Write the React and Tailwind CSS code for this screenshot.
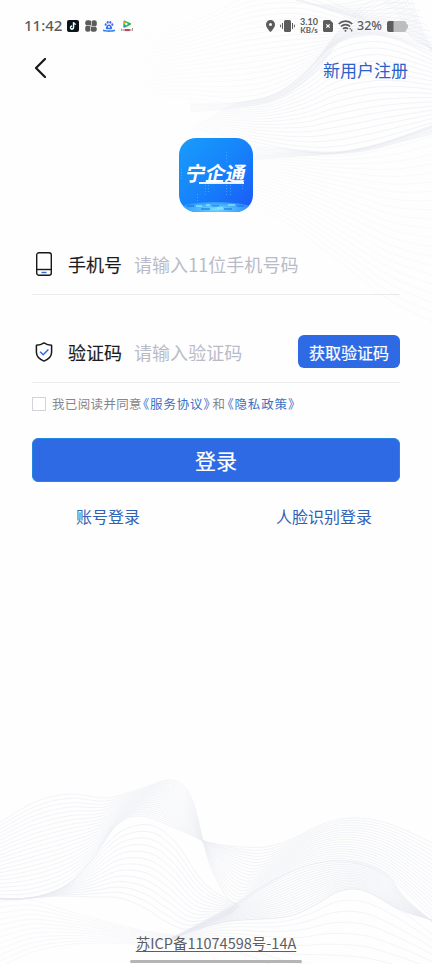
import { useMemo } from 'react';

// Each sheet is a fan of lines running between two guide curves
const TOP_SHEETS = [
  {
    from: [[110, 40], [190, 22], [250, -4], [300, -8], [345, 8], [385, 32], [420, 48], [440, 56]],
    to: [[110, 100], [180, 98], [235, 103], [275, 94], [308, 70], [335, 36], [360, 8], [400, -14]],
    lines: 20,
    opacity: 0.38
  },
  {
    from: [[235, 103], [275, 94], [308, 70], [335, 44], [370, 35], [400, 41], [440, 60]],
    to: [[190, 128], [250, 141], [300, 151], [335, 153], [370, 147], [400, 138], [440, 124]],
    lines: 18,
    opacity: 0.5
  },
  {
    from: [[270, -8], [300, 1], [325, 5], [355, 2], [385, -8], [410, -10]],
    to: [[270, -8], [310, 3], [350, 16], [400, 28], [415, 40], [440, 52]],
    lines: 10,
    opacity: 0.45
  },
  {
    from: [[408, -8], [415, 10], [422, 30], [432, 50], [445, 80]],
    to: [[370, -8], [395, 10], [412, 36], [426, 45], [445, 44]],
    lines: 8,
    opacity: 0.4
  },
  {
    from: [[190, 103], [235, 103], [275, 94], [308, 70], [335, 36], [360, 8]],
    to: [[190, 112], [235, 108], [280, 98], [315, 72], [340, 42], [372, 33]],
    lines: 8,
    opacity: 0.5
  },
  {
    from: [[220, 160], [290, 153], [335, 153], [370, 147], [400, 138], [440, 124]],
    to: [[180, 185], [240, 200], [290, 225], [340, 262], [390, 300], [440, 325]],
    lines: 22,
    opacity: 0.22
  },
  {
    from: [[250, 146], [300, 150], [335, 152], [370, 146], [400, 137], [440, 122]],
    to: [[250, 160], [300, 156], [335, 154], [370, 150], [400, 142], [440, 132]],
    lines: 8,
    opacity: 0.45
  }
];

const BOTTOM_SHEETS = [
  {
    from: [[-6, 826], [35, 802], [70, 794], [107, 798], [140, 789], [172, 780], [191, 797], [203, 841]],
    to: [[-6, 898], [30, 898], [65, 886], [92, 860], [116, 826], [140, 816], [175, 828], [203, 841]],
    lines: 22,
    opacity: 0.5
  },
  {
    from: [[-6, 898], [30, 898], [65, 886], [92, 860], [120, 832], [150, 825], [175, 842], [205, 884], [240, 906]],
    to: [[-6, 900], [30, 898], [60, 896], [92, 897], [120, 898], [145, 908], [165, 921], [190, 929], [232, 913]],
    lines: 13,
    opacity: 0.55
  },
  {
    from: [[203, 841], [230, 846], [265, 847], [292, 839], [320, 825], [352, 818], [390, 824], [440, 847]],
    to: [[203, 841], [213, 872], [234, 903], [262, 888], [300, 868], [345, 861], [390, 878], [440, 926]],
    lines: 19,
    opacity: 0.55
  },
  {
    from: [[172, 938], [225, 910], [270, 882], [310, 865], [350, 861], [385, 873], [405, 898], [440, 928]],
    to: [[172, 938], [225, 922], [285, 917], [315, 905], [340, 891], [365, 891], [400, 910], [440, 922]],
    lines: 18,
    opacity: 0.6
  },
  {
    from: [[172, 938], [225, 922], [285, 917], [315, 905], [340, 891], [365, 891], [400, 910], [440, 940]],
    to: [[172, 938], [215, 944], [250, 956], [285, 970], [320, 976], [365, 980], [400, 985], [440, 990]],
    lines: 9,
    opacity: 0.45
  },
  {
    from: [[-6, 902], [30, 900], [65, 910], [100, 920], [140, 930], [180, 936]],
    to: [[-6, 970], [30, 953], [65, 945], [100, 943], [140, 944], [180, 940]],
    lines: 12,
    opacity: 0.3
  }
];

const round = (n) => Math.round(n * 10) / 10;

// Catmull-Rom through the points, written out as cubic segments
const toPath = (points) => {
  let d = `M${round(points[0][0])} ${round(points[0][1])}`;
  for (let i = 0; i < points.length - 1; i++) {
    const p0 = points[i - 1] || points[i];
    const p1 = points[i];
    const p2 = points[i + 1];
    const p3 = points[i + 2] || p2;
    d += `C${round(p1[0] + (p2[0] - p0[0]) / 6)} ${round(p1[1] + (p2[1] - p0[1]) / 6)} ${round(p2[0] - (p3[0] - p1[0]) / 6)} ${round(p2[1] - (p3[1] - p1[1]) / 6)} ${round(p2[0])} ${round(p2[1])}`;
  }
  return d;
};

const buildLines = ({ from, to, lines }) =>
  Array.from({ length: lines }, (_, i) => {
    const t = i / (lines - 1);
    return toPath(from.map(([x, y], k) => [x + (to[k][0] - x) * t, y + (to[k][1] - y) * t]));
  });

const WaveBackground = () => {
  const sheets = useMemo(
    () => [...TOP_SHEETS, ...BOTTOM_SHEETS].map((sheet) => ({ opacity: sheet.opacity, paths: buildLines(sheet) })),
    []
  );

  return (
    <svg className="absolute inset-0 w-full h-full pointer-events-none" viewBox="0 0 432 964" fill="none">
      <defs>
        <linearGradient id="fade" x1="110" y1="0" x2="320" y2="0" gradientUnits="userSpaceOnUse">
          <stop offset="0" stopColor="#fff" stopOpacity="0" />
          <stop offset="1" stopColor="#fff" />
        </linearGradient>
        <mask id="topFade" maskUnits="userSpaceOnUse" x="0" y="0" width="432" height="340">
          <rect width="432" height="340" fill="url(#fade)" />
        </mask>
      </defs>
      <g mask="url(#topFade)">
        {sheets.slice(0, TOP_SHEETS.length).map((sheet, i) => (
          <g key={i} stroke="#dcdfea" strokeWidth="0.7" opacity={sheet.opacity}>
            {sheet.paths.map((d, k) => <path key={k} d={d} />)}
          </g>
        ))}
      </g>
      {sheets.slice(TOP_SHEETS.length).map((sheet, i) => (
        <g key={i} stroke="#dcdfea" strokeWidth="0.7" opacity={sheet.opacity}>
          {sheet.paths.map((d, k) => <path key={k} d={d} />)}
        </g>
      ))}
    </svg>
  );
};

const StatusBar = () => (
  <div className="flex items-center h-[52px] pl-6 pr-6 text-[#5c5c5c]">
    <span className="w-[43px] -mt-px text-[15px] leading-none font-medium font-['Noto_Sans'] whitespace-nowrap">11:42</span>

    <div className="flex items-center gap-[6px]">
      <svg className="w-3 h-3" viewBox="0 0 12 12">
        <rect width="12" height="12" rx="2" fill="#111118" />
        <path d="M6.4 2.3v5.2a1.5 1.5 0 1 1-1.5-1.5" fill="none" stroke="#5ff0ee" strokeWidth="1.3" />
        <path d="M6.7 2.3v5.2a1.6 1.6 0 1 1-1.6-1.5M6.7 2.4c.2 1.1 1 1.9 2.2 2" fill="none" stroke="#fff" strokeWidth="1.1" />
      </svg>
      <svg className="w-3 h-3" viewBox="0 0 12 12" fill="currentColor">
        <rect x="0.2" y="0.2" width="6.3" height="5.3" rx="2.3" />
        <rect x="6.5" y="0.2" width="5.3" height="6.3" rx="2.3" />
        <rect x="5.5" y="6.5" width="6.3" height="5.3" rx="2.3" />
        <rect x="0.2" y="5.5" width="5.3" height="6.3" rx="2.3" />
        <rect x="4" y="4" width="4" height="4" />
        <path d="M6.5 2v3.5H3.500M10 6.500H6.500V3.500M5.500 10V6.500h3M2 5.500h3.500v3" fill="none" stroke="#fff" strokeWidth="0.4" />
      </svg>
      <svg className="w-3 h-3" viewBox="0 0 12 12">
        <g fill="#3d6df0">
          <ellipse cx="2.7" cy="4.6" rx="1" ry="1.3" />
          <ellipse cx="4.7" cy="2.3" rx="1" ry="1.4" />
          <ellipse cx="7.3" cy="2.3" rx="1" ry="1.4" />
          <ellipse cx="9.3" cy="4.6" rx="1" ry="1.3" />
          <path d="M6 4.5c1.4 0 3.2 2.2 3.2 3.5S8 9.3 6 9.3 2.8 9.3 2.8 8 4.6 4.5 6 4.5Z" />
        </g>
        <circle cx="6" cy="6.9" r="1" fill="#fff" />
        <path d="M0 9.5c2 1 10 1 12 0V11c-2 1.2-10 1.2-12 0Z" fill="#2f86ee" />
      </svg>
      <svg className="w-3 h-3" viewBox="0 0 12 12">
        <path d="M3.3 1.2 9.3 4 3.3 7Z" fill="#26b65a" stroke="#26b65a" strokeWidth="1.6" strokeLinejoin="round" />
        <path d="M2.5 1v3.5L5.5 2Z" fill="#f9a11b" />
        <path d="M2.5 7.6V4.6l2.5 1.7Z" fill="#239be8" />
        <circle cx="5.3" cy="4" r="1.2" fill="#fff" />
        <path d="M.6 8.500v2.500M2.200 9v2M9.900 9v2M11.500 8v3" stroke="#a08888" strokeWidth="0.9" />
        <path d="M3.500 9h5.400v2.100H3.500Z" fill="#b9485b" />
      </svg>
    </div>

    <div className="flex items-center ml-auto">
      <svg className="w-[9px] h-3" viewBox="0 0 9 12" fill="currentColor">
        <path fillRule="evenodd" d="M4.5 0A4.5 4.5 0 0 1 9 4.5C9 7.5 6 10.6 4.5 12 3 10.6 0 7.5 0 4.5A4.5 4.5 0 0 1 4.5 0Zm0 3a1.5 1.5 0 1 0 0 3 1.5 1.5 0 0 0 0-3Z" />
      </svg>
      <svg className="w-[15px] h-3 ml-[5px]" viewBox="0 0 15 12" fill="currentColor">
        <rect x="4" y="0" width="7" height="12" rx="1.5" />
        <path d="M2.5 3v6M.6 4.7v2.6M12.5 3v6M14.4 4.7v2.6" stroke="currentColor" strokeWidth="1" />
      </svg>
      <div className="flex flex-col items-center w-[20px] ml-[4px] font-['Lato'] font-bold whitespace-nowrap">
        <span className="text-[9px] leading-[8px]">3.10</span>
        <span className="text-[8px] leading-[8px]">KB/s</span>
      </div>
      <svg className="w-[10px] h-3 ml-[4px]" viewBox="0 0 10 12">
        <path d="M1.5 0H7l3 3v7.5A1.5 1.5 0 0 1 8.5 12h-7A1.5 1.5 0 0 1 0 10.5v-9A1.5 1.5 0 0 1 1.5 0Z" fill="currentColor" />
        <path d="m3.3 4.3 3.4 3.4m0-3.4L3.3 7.7" stroke="#fff" strokeWidth="1.2" />
      </svg>
      <svg className="w-[15px] h-3 ml-[5px]" viewBox="0 0 15 12" fill="none" stroke="currentColor" strokeWidth="1.7">
        <path d="M.7 4c3.800-3.800 9.800-3.800 13.600 0M2.900 6.500c2.600-2.600 6.600-2.600 9.200 0M5 8.900c1.400-1.400 3.600-1.400 5 0" />
        <circle cx="7.5" cy="10.8" r="1" fill="currentColor" stroke="none" />
        <path d="M12.2 8v1.5M13.700 9.500v2" strokeWidth="1.3" />
      </svg>
      <span className="ml-[4px] mt-px w-[26px] text-[12.5px] leading-none font-medium font-['Noto_Sans']">32%</span>
      <svg className="w-[21px] h-[11px] ml-[4px]" viewBox="0 0 21 11">
        <path d="M2.5 0H17a2.5 2.5 0 0 1 2.5 2.5v.6c1 0 1.5.8 1.5 2.4s-.5 2.4-1.5 2.4v.6A2.5 2.5 0 0 1 17 11H2.5A2.5 2.5 0 0 1 0 8.500v-6A2.500 2.500 0 0 1 2.500 0Z" fill="#bdbdbd" />
        <path d="M2.5 0H6.500v11h-4A2.500 2.500 0 0 1 0 8.500v-6A2.500 2.500 0 0 1 2.500 0Z" fill="currentColor" />
      </svg>
    </div>
  </div>
);

const AppLogo = () => (
  <div className="relative w-[74px] h-[74px] rounded-[17px] overflow-hidden bg-linear-to-br from-[#1a9cfb] via-[#1683fb] to-[#1e55f5] flex items-center justify-center">
    <svg className="absolute inset-0 w-full h-full" viewBox="0 0 74 74">
      <defs>
        <radialGradient id="floor" cx="0.5" cy="0.4" r="0.6">
          <stop offset="0" stopColor="#7be0ff" />
          <stop offset="1" stopColor="#269dfa" stopOpacity="0.4" />
        </radialGradient>
      </defs>
      <ellipse cx="37" cy="73" rx="42" ry="9" fill="url(#floor)" />
      <path d="M8 67h7v2h-7zM22 70h9v2h-9zM45 70h8v2h-8zM33 67h7v1.500h-7zM58 67h7v2h-7z" fill="#1574ee" opacity="0.6" />
      <path d="M17 67h6v2h-6zM38 69h6v2h-6zM49 66h7v2h-7zM27 66h4v2h-4z" fill="#9becff" opacity="0.6" />
      <g stroke="#6cc8ff" strokeWidth="0.9" strokeDasharray="1 2" opacity="0.55">
        <path d="M47.5 14v12M51.5 47v10M26.5 47v11M29.5 47v8M18.5 56v8M2.5 31v11M47.5 47v10M63.5 47v4" />
      </g>
    </svg>
    <span className="relative -top-[2px] text-[20px] leading-none font-bold text-white -skew-x-12 whitespace-nowrap">
      宁企通
    </span>
    <span className="absolute left-[20px] top-[44px] w-[45px] h-[1.5px] bg-white/90" />
  </div>
);

const PhoneIcon = () => (
  <svg className="w-4 h-6" viewBox="0 0 16 24" fill="none" stroke="#17171c" strokeWidth="1.4">
    <rect x="0.7" y="0.7" width="14.6" height="22.6" rx="2.3" />
    <path d="M1 17.5h14" />
    <path d="M5.5 20.5h5" stroke="#2e6be3" />
  </svg>
);

const ShieldIcon = () => (
  <svg className="w-[18px] h-5" viewBox="0 0 18 20" fill="none" strokeWidth="1.5">
    <path d="M9 .9c2.2 1.5 4.8 2.300 7.600 2.400v7c0 4-3 7-7.600 8.800-4.600-1.800-7.600-4.800-7.600-8.800v-7C4.200 3.200 6.800 2.400 9 .9Z" stroke="#17171c" strokeLinejoin="round" />
    <path d="m5.200 9.800 3 3 5.200-5.300" stroke="#2e6be3" />
  </svg>
);

const FormRow = ({ icon, label, placeholder, children }) => (
  <div className="flex items-center h-[60px] border-b border-[#ebebee]">
    <div className="w-6 flex justify-center -mt-0.5">{icon}</div>
    <span className="ml-3 w-[66px] -mt-px text-[18px] text-[#1b1b20] [-webkit-text-stroke:0.15px_currentColor]">{label}</span>
    <input
      type="text"
      placeholder={placeholder}
      className="flex-1 min-w-0 -mt-px text-[18px] tracking-[0.05px] bg-transparent outline-none placeholder:text-[#b9bcc8]"
    />
    {children}
  </div>
);

const App = () => (
  <div className="relative w-full h-[964px] bg-[#fefefe] overflow-hidden font-['Noto_Sans_CJK_SC',sans-serif]">
    <WaveBackground />

    <div className="relative flex flex-col h-full">
      <StatusBar />

      {/* Header */}
      <div className="flex items-center justify-between h-8 pl-[34px] pr-6">
        <svg className="w-3 h-5" viewBox="0 0 12 20" fill="none" stroke="#17171c" strokeWidth="2.2" strokeLinecap="round" strokeLinejoin="round">
          <path d="M11 1 2 10l9 9" />
        </svg>
        <a className="text-[17px] leading-8 mt-1 text-[#2b60cb]">新用户注册</a>
      </div>

      <div className="flex justify-center mt-[54px]">
        <AppLogo />
      </div>

      {/* Form */}
      <div className="px-8 mt-[23px]">
        <FormRow icon={<PhoneIcon />} label="手机号" placeholder="请输入11位手机号码" />
        <div className="h-7" />
        <FormRow icon={<ShieldIcon />} label="验证码" placeholder="请输入验证码">
          <button className="w-[102px] h-[33px] -mt-0.5 rounded-[6px] bg-[#2e6ae3] text-white text-[16px] whitespace-nowrap [-webkit-text-stroke:0.2px_currentColor]">
            获取验证码
          </button>
        </FormRow>

        <label className="flex items-center h-[42px] text-[12.5px] tracking-[0.35px] text-[#85868c] whitespace-nowrap [font-feature-settings:'halt']">
          <span className="w-[14px] h-[14px] mr-[6px] -mt-px border border-[#d3d4db] bg-white" />
          <span>我已阅读并同意</span>
          <a className="text-[#3a70c4] ml-px tracking-[0.85px]">《服务协议》</a>
          <span className="ml-0.5">和</span>
          <a className="text-[#3a70c4] ml-0.5 tracking-[0.85px]">《隐私政策》</a>
        </label>

        <button className="block w-full h-11 mt-[13px] rounded-[6px] border border-[#2387e0] bg-[#2e6ae3] text-white text-[21px] leading-none [-webkit-text-stroke:0.2px_currentColor]">
          登录
        </button>

        <div className="flex justify-between pl-11 pr-7 mt-[22px] text-[16px] leading-6 text-[#2f61b5]">
          <a>账号登录</a>
          <a>人脸识别登录</a>
        </div>
      </div>

      {/* Footer */}
      <div className="mt-auto flex flex-col items-center">
        <a className="text-[14.5px] leading-6 text-[#5d5e63] underline underline-offset-2 decoration-1">苏ICP备11074598号-14A</a>
        <div className="w-[172px] h-[3px] mt-[5px] mb-px rounded-full bg-[#b5b5b7]" />
      </div>
    </div>
  </div>
);

export default App;
